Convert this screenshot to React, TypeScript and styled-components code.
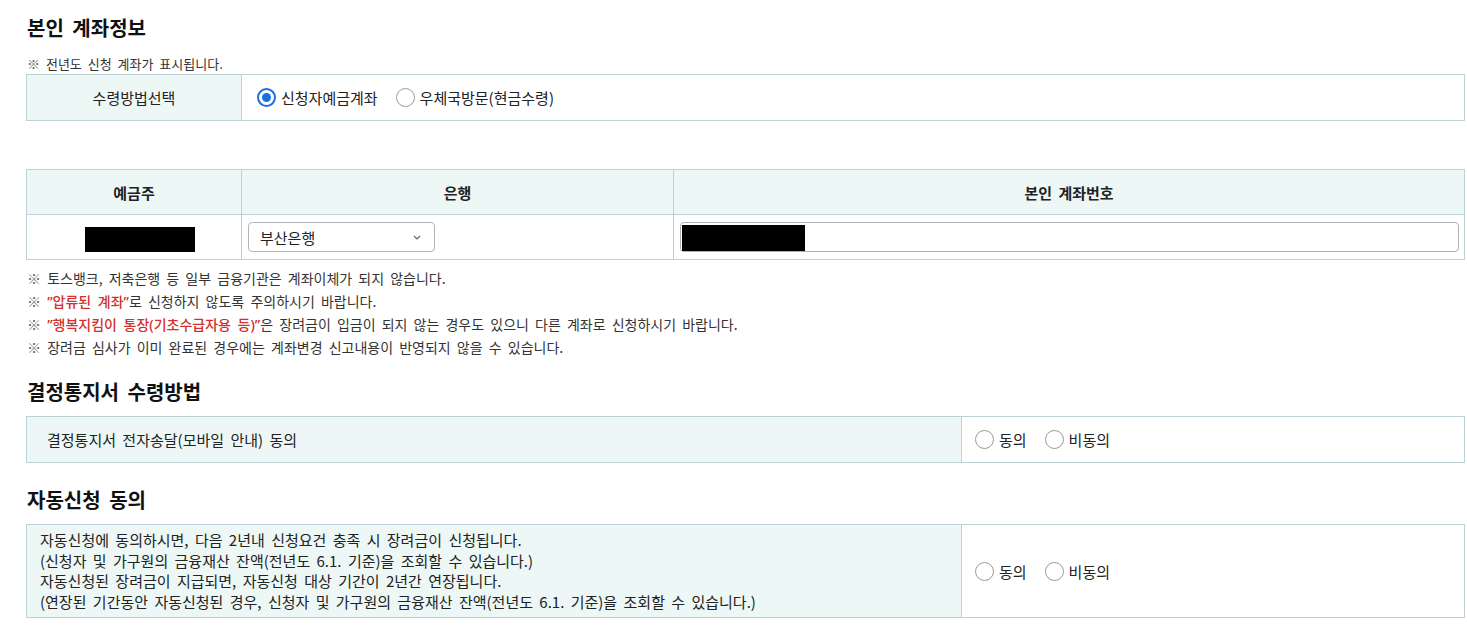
import React from "react";
import styled, { createGlobalStyle } from "styled-components";

const Global = createGlobalStyle`
  html, body { margin: 0; padding: 0; background: #fff; }
  body { font-family: "Noto Sans CJK KR", "Noto Sans", sans-serif; color: #222; }
  * { box-sizing: border-box; }
`;

const Page = styled.div`
  padding: 16px 2px 10px 26px;
  width: 1467px;
`;

const Title = styled.h2<{ $mt?: number }>`
  margin: ${(p) => p.$mt ?? 0}px 0 0 1px;
  font-size: 20px;
  line-height: 24px;
  font-weight: 700;
  color: #111;
  word-spacing: 4px;
`;

const NoteList = styled.ul<{ $mt?: number }>`
  list-style: none;
  margin: ${(p) => p.$mt ?? 0}px 0 0 1px;
  padding: 0;
`;

const Note = styled.li<{ $lh?: number; $fs?: number }>`
  font-size: ${(p) => p.$fs ?? 14}px;
  line-height: ${(p) => p.$lh ?? 23}px;
  color: #333;
  word-spacing: 3px;
  &::before { content: "※ "; color: #666; }
`;

const Red = styled.span`
  font-family: "Noto Sans", "Noto Sans CJK KR", sans-serif;
  color: #d3302b;
  font-weight: 500;
`;

const Table = styled.table<{ $mt?: number }>`
  width: 1439px;
  border-collapse: collapse;
  margin-top: ${(p) => p.$mt ?? 0}px;
  table-layout: fixed;
  font-size: 15px;
  color: #222;
  word-spacing: 3px;
`;

const Th = styled.th<{ $w?: number; $h?: number; $align?: string; $pl?: number }>`
  background: #edf7f6;
  border: 1px solid #bcd2d6;
  font-weight: 400;
  height: ${(p) => p.$h ?? 46}px;
  ${(p) => (p.$w ? `width: ${p.$w}px;` : "")}
  text-align: ${(p) => p.$align ?? "center"};
  padding: 0 0 0 ${(p) => p.$pl ?? 0}px;
  vertical-align: middle;
`;

const HeadTh = styled(Th)`
  font-weight: 700;
`;

const Td = styled.td<{ $h?: number; $align?: string; $pl?: number }>`
  border: 1px solid #bcd2d6;
  height: ${(p) => p.$h ?? 46}px;
  text-align: ${(p) => p.$align ?? "left"};
  padding: 0 6px 0 ${(p) => p.$pl ?? 6}px;
  vertical-align: middle;
`;

const DescTh = styled(Th)`
  line-height: 20.5px;
  padding: 4px 0 4px 13px;
  text-align: left;
`;

const RadioGroup = styled.div<{ $gap: number }>`
  display: flex;
  align-items: center;
  gap: ${(p) => p.$gap}px;
`;

const RadioLabel = styled.label`
  display: inline-flex;
  align-items: center;
  gap: 5px;
  font-size: 15px;
  color: #222;
`;

const Circle = styled.span<{ $on?: boolean }>`
  width: 19px;
  height: 19px;
  border-radius: 50%;
  border: ${(p) => (p.$on ? "2px solid #1a6fe0" : "1px solid #9a9a9a")};
  display: inline-flex;
  align-items: center;
  justify-content: center;
  background: #fff;
  &::after {
    content: "";
    width: 9px;
    height: 9px;
    border-radius: 50%;
    background: ${(p) => (p.$on ? "#1a6fe0" : "transparent")};
  }
`;

const Redact = styled.span<{ $w: number; $h: number; $mt?: number; $ml?: number }>`
  display: inline-block;
  width: ${(p) => p.$w}px;
  height: ${(p) => p.$h}px;
  margin: ${(p) => p.$mt ?? 0}px 0 0 ${(p) => p.$ml ?? 0}px;
  background: #000;
  vertical-align: middle;
`;

const Select = styled.div`
  width: 187px;
  height: 30px;
  border: 1px solid #b5b5b5;
  border-radius: 4px;
  display: flex;
  align-items: center;
  justify-content: space-between;
  padding: 0 13px 0 11px;
  font-size: 15px;
  color: #222;
  background: #fff;
`;

const Input = styled.div`
  width: 779px;
  height: 30px;
  border: 1px solid #b0b0b0;
  border-radius: 4px;
  display: flex;
  align-items: flex-end;
  padding: 0 0 0 1px;
  background: #fff;
`;

const Radio = ({ on, children }: { on?: boolean; children: React.ReactNode }) => (
  <RadioLabel>
    <Circle $on={on} />
    {children}
  </RadioLabel>
);

export default function App() {
  return (
    <Page>
      <Global />
      <Title>본인 계좌정보</Title>
      <NoteList $mt={13}>
        <Note $lh={21} $fs={13}>전년도 신청 계좌가 표시됩니다.</Note>
      </NoteList>
      <Table>
        <tbody>
          <tr>
            <Th $w={215}>수령방법선택</Th>
            <Td $pl={15}>
              <RadioGroup $gap={18}>
                <Radio on>신청자예금계좌</Radio>
                <Radio>우체국방문(현금수령)</Radio>
              </RadioGroup>
            </Td>
          </tr>
        </tbody>
      </Table>

      <Table $mt={48}>
        <thead>
          <tr>
            <HeadTh $w={215} $h={45}>예금주</HeadTh>
            <HeadTh $w={432} $h={45}>은행</HeadTh>
            <HeadTh $h={45}>본인 계좌번호</HeadTh>
          </tr>
        </thead>
        <tbody>
          <tr>
            <Td $h={45} $align="center">
              <Redact $w={110} $h={25} $mt={4} $ml={12} />
            </Td>
            <Td $h={45}>
              <Select>
                <span>부산은행</span>
                <svg width="8" height="5" viewBox="0 0 8 5">
                  <path d="M1 1l3 3 3-3" fill="none" stroke="#666" strokeWidth="1.2" />
                </svg>
              </Select>
            </Td>
            <Td $h={45}>
              <Input>
                <Redact $w={123} $h={26} />
              </Input>
            </Td>
          </tr>
        </tbody>
      </Table>

      <NoteList $mt={7}>
        <Note>토스뱅크, 저축은행 등 일부 금융기관은 계좌이체가 되지 않습니다.</Note>
        <Note>
          <Red>”압류된 계좌”</Red>로 신청하지 않도록 주의하시기 바랍니다.
        </Note>
        <Note>
          <Red>”행복지킴이 통장(기초수급자용 등)”</Red>은 장려금이 입금이 되지 않는 경우도 있으니 다른 계좌로 신청하시기 바랍니다.
        </Note>
        <Note>장려금 심사가 이미 완료된 경우에는 계좌변경 신고내용이 반영되지 않을 수 있습니다.</Note>
      </NoteList>

      <Title $mt={21}>결정통지서 수령방법</Title>
      <Table $mt={12}>
        <tbody>
          <tr>
            <Th $w={935} $align="left" $pl={20}>결정통지서 전자송달(모바일 안내) 동의</Th>
            <Td $pl={13}>
              <RadioGroup $gap={18}>
                <Radio>동의</Radio>
                <Radio>비동의</Radio>
              </RadioGroup>
            </Td>
          </tr>
        </tbody>
      </Table>

      <Title $mt={25}>자동신청 동의</Title>
      <Table $mt={12}>
        <tbody>
          <tr>
            <DescTh $w={935} $h={93}>
              자동신청에 동의하시면, 다음 2년내 신청요건 충족 시 장려금이 신청됩니다.
              <br />
              (신청자 및 가구원의 금융재산 잔액(전년도 6.1. 기준)을 조회할 수 있습니다.)
              <br />
              자동신청된 장려금이 지급되면, 자동신청 대상 기간이 2년간 연장됩니다.
              <br />
              (연장된 기간동안 자동신청된 경우, 신청자 및 가구원의 금융재산 잔액(전년도 6.1. 기준)을 조회할 수 있습니다.)
            </DescTh>
            <Td $pl={13} $h={93}>
              <RadioGroup $gap={18}>
                <Radio>동의</Radio>
                <Radio>비동의</Radio>
              </RadioGroup>
            </Td>
          </tr>
        </tbody>
      </Table>
    </Page>
  );
}
